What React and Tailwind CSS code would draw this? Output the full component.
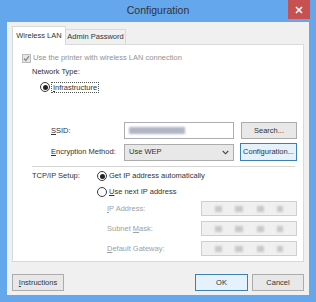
import React from "react";

const F = { fontFamily: '"Liberation Sans", Arial, sans-serif' };

function Radio({ checked }) {
  return (
    <div className="w-[10px] h-[10px] rounded-full border border-[#3a3a3a] bg-white flex items-center justify-center shrink-0">
      {checked && <div className="w-[5px] h-[5px] rounded-full bg-[#222]" />}
    </div>
  );
}

function Btn({ children, w, focus, className = "" }) {
  return (
    <div
      className={`h-[17px] flex items-center justify-center border text-[7.5px] ${
        focus ? "border-[#3c7fb1] bg-[#e5f1fb]" : "border-[#acacac] bg-[#e8e8e8]"
      } ${className}`}
      style={{ width: w }}
    >
      {children}
    </div>
  );
}

function IpField() {
  return (
    <div className="w-[96px] h-[15px] border border-[#cfcfcf] bg-[#f0f0f0] flex items-center justify-around px-[6px]">
      <div className="w-[7px] h-[6px] bg-[#c8c8c8] blur-[1px]" />
      <div className="w-[8px] h-[6px] bg-[#c8c8c8] blur-[1px]" />
      <div className="w-[7px] h-[6px] bg-[#c8c8c8] blur-[1px]" />
      <div className="w-[6px] h-[6px] bg-[#c8c8c8] blur-[1px]" />
    </div>
  );
}

export default function App() {
  return (
    <div
      className="w-[316px] h-[302px] bg-[#64a7ec] flex flex-col relative text-[#333] overflow-hidden"
      style={F}
    >
      {/* title bar */}
      <div className="h-[22px] flex items-center justify-center text-[10.5px] text-[#333]">
        Configuration
      </div>
      <div className="absolute top-0 right-[6px] w-[22px] h-[19px] bg-[#c75050] flex items-center justify-center">
        <svg width="8" height="8" viewBox="0 0 8 8">
          <path d="M1 1L7 7M7 1L1 7" stroke="white" strokeWidth="1.6" />
        </svg>
      </div>

      {/* client */}
      <div className="flex-1 mx-[7px] mb-[7px] bg-[#f0f0f0] flex flex-col pl-[5px] pr-[5px]">
        {/* tabs */}
        <div className="flex items-end h-[18px] mt-[4px]">
          <div className="h-[19px] w-[54px] bg-white border border-b-0 border-[#d9d9d9] flex items-center justify-center text-[7.5px] relative -mb-px z-10">
            Wireless LAN
          </div>
          <div className="h-[15px] w-[60px] bg-[#f0f0f0] border border-l-0 border-b-0 border-[#d9d9d9] flex items-center justify-center text-[7.5px]">
            Admin Password
          </div>
        </div>
        {/* panel */}
        <div className="h-[218px] bg-white border border-[#d9d9d9] flex flex-col text-[7.5px]">
          {/* checkbox */}
          <div className="flex items-center gap-[2px] ml-[9px] mt-[8px] h-[10px] text-[#929292]">
            <div className="w-[9px] h-[9px] border border-[#bcbcbc] bg-[#e6e6e6] flex items-center justify-center">
              <svg width="7" height="7" viewBox="0 0 7 7">
                <path d="M1 3.5L2.8 5.5L6 1.2" stroke="#8a8a8a" strokeWidth="1.3" fill="none" />
              </svg>
            </div>
            <span>Use the printer with wireless LAN connection</span>
          </div>
          <div className="ml-[19px] mt-[4px] h-[10px] flex items-center">Network Type:</div>
          <div className="ml-[27px] mt-[5px] h-[10px] flex items-center gap-[1px]">
            <Radio checked />
            <span className="border border-dotted border-[#555] px-[1px] leading-[9px]">
              <span className="underline">I</span>nfrastructure
            </span>
          </div>
          {/* SSID */}
          <div className="flex items-center mt-[30px] h-[17px]">
            <div className="ml-[38px] w-[73px]">
              <span className="underline">S</span>SID:
            </div>
            <div className="w-[110px] h-[17px] border border-[#abadb3] bg-white flex items-center pl-[4px]">
              <div className="w-[56px] h-[7px] bg-[#9ea4b6] blur-[1.2px] opacity-80" />
            </div>
            <Btn w="56px" className="ml-[7px]">Search...</Btn>
          </div>
          {/* Encryption */}
          <div className="flex items-center mt-[4px] h-[18px]">
            <div className="ml-[38px] w-[73px]">
              <span className="underline">E</span>ncryption Method:
            </div>
            <div className="w-[110px] h-[17px] border border-[#acacac] bg-[#e8e8e8] flex items-center justify-between px-[4px]">
              <span>Use WEP</span>
              <svg width="7" height="5" viewBox="0 0 7 5">
                <path d="M0.8 1L3.5 3.8L6.2 1" stroke="#444" strokeWidth="1.1" fill="none" />
              </svg>
            </div>
            <Btn w="57px" focus className="ml-[6px] h-[18px]">Configuration...</Btn>
          </div>
          {/* separator */}
          <div className="ml-[19px] mr-[8px] mt-[5px] h-px bg-[#d5d5d5]" />
          {/* TCP/IP */}
          <div className="flex items-center mt-[4px] h-[10px]">
            <div className="ml-[19px] w-[65px]">TCP/IP Setup:</div>
            <Radio checked />
            <span className="ml-[2px]">Get IP address automatically</span>
          </div>
          <div className="flex items-center mt-[6px] h-[10px] ml-[84px]">
            <Radio />
            <span className="ml-[2px]">
              <span className="underline">U</span>se next IP address
            </span>
          </div>
          {[
            ["I", "P Address:"],
            ["Subnet ", "M", "ask:"],
            ["D", "efault Gateway:"],
          ].map((l, i) => (
            <div key={i} className={`flex items-center h-[15px] ${i === 0 ? "mt-[4px]" : "mt-[5px]"}`}>
              <div className="ml-[94px] w-[94px] text-[#a0a0a0]">
                {l.length === 2 ? (
                  <>
                    <span className="underline">{l[0]}</span>
                    {l[1]}
                  </>
                ) : (
                  <>
                    {l[0]}
                    <span className="underline">{l[1]}</span>
                    {l[2]}
                  </>
                )}
              </div>
              <IpField />
            </div>
          ))}
        </div>
        {/* bottom buttons */}
        <div className="flex items-center mt-[12px]">
          <Btn w="52px">
            <span>
              <span className="underline">I</span>nstructions
            </span>
          </Btn>
          <div className="flex-1" />
          <Btn w="53px" focus>OK</Btn>
          <Btn w="52px" className="ml-[4px]">Cancel</Btn>
        </div>
      </div>
    </div>
  );
}
